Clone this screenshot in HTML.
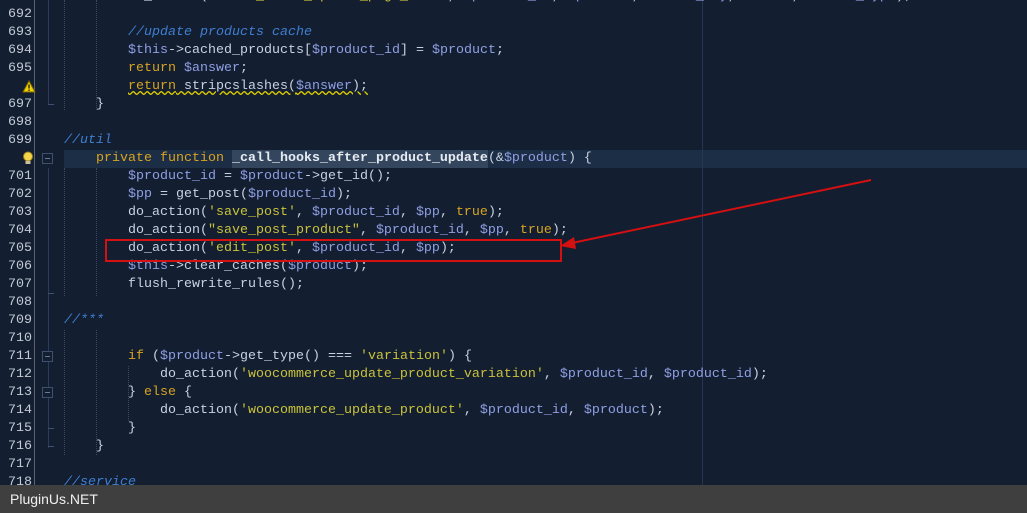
<!DOCTYPE html>
<html><head><meta charset="utf-8"><style>
html,body{margin:0;padding:0}
body{width:1027px;height:513px;background:#131e31;position:relative;overflow:hidden;font-family:"Liberation Mono",monospace;font-size:13.33px}
.ln{position:absolute;left:0;width:32px;text-align:right;color:#c3cad4;height:18px;line-height:18px}
.c{position:absolute;left:64px;height:18px;line-height:18px;color:#c9d2e2;white-space:pre}
.v{color:#8f9fe3}.k{color:#d8a420}.s{color:#c9c23a}.m{color:#3f7fd0;font-style:italic}
.sep{position:absolute;left:34px;top:0;width:1px;height:485px;background:#5b6272}
.fold{position:absolute;left:48px;width:1px;background:#2b3c58}
.fb{position:absolute;left:42px;width:9px;height:9px;border:1px solid #3e5070;background:#131e31}
.fb:after{content:"";position:absolute;left:2px;top:4px;width:5px;height:1px;background:#6a7a95}
.tk{position:absolute;left:48px;width:6px;height:1px;background:#3e5070}
.g{position:absolute;width:0;border-left:1px dotted #3a4a66}
</style></head><body>
<div style="position:absolute;left:64px;top:150px;width:963px;height:18px;background:#1c2d46"></div>
<div style="position:absolute;left:232px;top:150px;width:256px;height:18px;background:#34465e"></div>
<div style="position:absolute;left:702px;top:0;width:1px;height:485px;background:#263650"></div>
<div class="sep"></div>
<div class="fold" style="top:0;height:105px"></div>
<div class="tk" style="top:104px"></div>
<div class="fold" style="top:168px;height:280px"></div>
<div class="fb" style="top:153px"></div>
<div class="fb" style="top:351px"></div>
<div class="fb" style="top:387px"></div>
<div class="tk" style="top:293px"></div>
<div class="tk" style="top:428px"></div>
<div class="tk" style="top:446px"></div>
<div class="g" style="left:64px;top:0;height:110px"></div>
<div class="g" style="left:96px;top:0;height:110px"></div>
<div class="g" style="left:96px;top:168px;height:128px"></div>
<div class="g" style="left:96px;top:330px;height:125px"></div>
<div class="g" style="left:128px;top:366px;height:55px"></div>
<div class="g" style="left:64px;top:168px;height:128px"></div>
<div class="g" style="left:64px;top:330px;height:125px"></div>

<svg style="position:absolute;left:22px;top:80px" width="14" height="13"><polygon points="7,1 13,12 1,12" fill="#f0d000" stroke="#806800" stroke-width="1"/><rect x="6.3" y="4.5" width="1.4" height="4" fill="#222"/><rect x="6.3" y="9.5" width="1.4" height="1.4" fill="#222"/></svg>
<svg style="position:absolute;left:22px;top:151px" width="12" height="15"><circle cx="6" cy="5.5" r="4.5" fill="#f5d54a" stroke="#a08020"/><rect x="3.5" y="10" width="5" height="3" fill="#c8c0a0"/></svg>

<div class="ln" style="top:-12px">691</div><div class="c" style="top:-12px">        do_action(<span class="s">'woocs_after_update_page_data'</span>, <span class="v">$product_id</span>, <span class="v">$product</span>, <span class="v">$field_key</span>, <span class="v">$value</span>, <span class="v">$field_type</span>);</div>
<div class="ln" style="top:6px">692</div>
<div class="ln" style="top:24px">693</div><div class="c" style="top:24px">        <span class="m">//update products cache</span></div>
<div class="ln" style="top:42px">694</div><div class="c" style="top:42px">        <span class="v">$this</span>->cached_products[<span class="v">$product_id</span>] = <span class="v">$product</span>;</div>
<div class="ln" style="top:60px">695</div><div class="c" style="top:60px">        <span class="k">return</span> <span class="v">$answer</span>;</div>
<div class="c" style="top:78px;">        <span style="text-decoration:underline wavy #e0d000"><span class="k">return</span> stripcslashes(<span class="v">$answer</span>);</span></div>
<div class="ln" style="top:96px">697</div><div class="c" style="top:96px">    }</div>
<div class="ln" style="top:114px">698</div>
<div class="ln" style="top:132px">699</div><div class="c" style="top:132px"><span class="m">//util</span></div>
<div class="c" style="top:150px">    <span class="k">private function</span> <b style="color:#e6ebf2">_call_hooks_after_product_update</b>(&amp;<span class="v">$product</span>) {</div>
<div class="ln" style="top:168px">701</div><div class="c" style="top:168px">        <span class="v">$product_id</span> = <span class="v">$product</span>->get_id();</div>
<div class="ln" style="top:186px">702</div><div class="c" style="top:186px">        <span class="v">$pp</span> = get_post(<span class="v">$product_id</span>);</div>
<div class="ln" style="top:204px">703</div><div class="c" style="top:204px">        do_action(<span class="s">'save_post'</span>, <span class="v">$product_id</span>, <span class="v">$pp</span>, <span class="k">true</span>);</div>
<div class="ln" style="top:222px">704</div><div class="c" style="top:222px">        do_action(<span class="s">"save_post_product"</span>, <span class="v">$product_id</span>, <span class="v">$pp</span>, <span class="k">true</span>);</div>
<div class="ln" style="top:240px">705</div><div class="c" style="top:240px">        do_action(<span class="s">'edit_post'</span>, <span class="v">$product_id</span>, <span class="v">$pp</span>);</div>
<div class="ln" style="top:258px">706</div><div class="c" style="top:258px">        <span class="v">$this</span>->clear_caches(<span class="v">$product</span>);</div>
<div class="ln" style="top:276px">707</div><div class="c" style="top:276px">        flush_rewrite_rules();</div>
<div class="ln" style="top:294px">708</div>
<div class="ln" style="top:312px">709</div><div class="c" style="top:312px"><span class="m">//***</span></div>
<div class="ln" style="top:330px">710</div>
<div class="ln" style="top:348px">711</div><div class="c" style="top:348px">        <span class="k">if</span> (<span class="v">$product</span>->get_type() === <span class="s">'variation'</span>) {</div>
<div class="ln" style="top:366px">712</div><div class="c" style="top:366px">            do_action(<span class="s">'woocommerce_update_product_variation'</span>, <span class="v">$product_id</span>, <span class="v">$product_id</span>);</div>
<div class="ln" style="top:384px">713</div><div class="c" style="top:384px">        } <span class="k">else</span> {</div>
<div class="ln" style="top:402px">714</div><div class="c" style="top:402px">            do_action(<span class="s">'woocommerce_update_product'</span>, <span class="v">$product_id</span>, <span class="v">$product</span>);</div>
<div class="ln" style="top:420px">715</div><div class="c" style="top:420px">        }</div>
<div class="ln" style="top:438px">716</div><div class="c" style="top:438px">    }</div>
<div class="ln" style="top:456px">717</div>
<div class="ln" style="top:474px">718</div><div class="c" style="top:474px"><span class="m">//service</span></div>

<div style="position:absolute;left:105px;top:239px;width:453px;height:19px;border:2px solid #d41010"></div>
<svg style="position:absolute;left:0;top:0" width="1027" height="513"><line x1="871" y1="180" x2="572" y2="243" stroke="#d41010" stroke-width="2"/><polygon points="560,246 574,237 576,249" fill="#d41010"/></svg>
<div style="position:absolute;left:0;top:485px;width:1027px;height:28px;background:#3f3f3f;color:#f0f0f0;font-family:'Liberation Sans',sans-serif;font-size:14px;line-height:28px;padding-left:10px;box-sizing:border-box">PluginUs.NET</div>
</body></html>
